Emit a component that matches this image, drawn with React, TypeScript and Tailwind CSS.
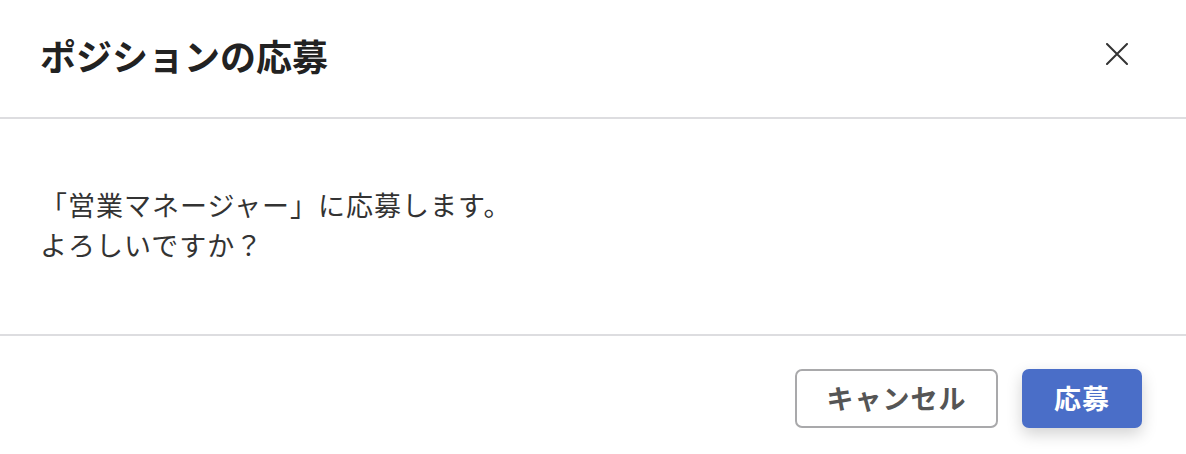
const font = { fontFamily: '"Noto Sans CJK JP", "Noto Sans", sans-serif' }

const CloseIcon = () => (
  <svg width="22" height="22" viewBox="0 0 22 22" fill="none" stroke="#333333" strokeWidth="2" strokeLinecap="round">
    <path d="M1 1 L21 21 M21 1 L1 21" />
  </svg>
)

export default function App() {
  return (
    <div className="w-[1186px] h-[454px] bg-white overflow-hidden" style={font}>
      {/* Header */}
      <header className="h-[119px] flex items-center justify-between pl-[40px] pr-[58px] border-b-2 border-[#dddde0]">
        <h1 className="text-[36px] leading-none font-bold text-[#222222] pb-[8px]">ポジションの応募</h1>
        <button className="w-[22px] h-[22px] flex items-center justify-center mb-[10px]">
          <CloseIcon />
        </button>
      </header>

      {/* Body */}
      <div className="h-[217px] border-b-2 border-[#dddde0] px-[40px] flex flex-col justify-center">
        <p className="text-[27px] leading-[40px] tracking-[1px] text-[#333333] pb-[4px]">
          「営業マネージャー」に応募します。
          <br />
          よろしいですか？
        </p>
      </div>

      {/* Footer */}
      <div className="flex justify-end gap-[24px] pt-[33px] pr-[44px]">
        <button className="h-[59px] w-[203px] rounded-[7px] border-2 border-[#a9a9ab] bg-white text-[27px] tracking-[1px] font-bold text-[#555555] flex items-center justify-center">
          キャンセル
        </button>
        <button className="h-[59px] w-[120px] rounded-[7px] bg-[#4a6ec8] text-[27px] tracking-[1px] font-bold text-white flex items-center justify-center shadow-[0_6px_16px_rgba(0,0,0,0.18)]">
          応募
        </button>
      </div>
    </div>
  )
}
